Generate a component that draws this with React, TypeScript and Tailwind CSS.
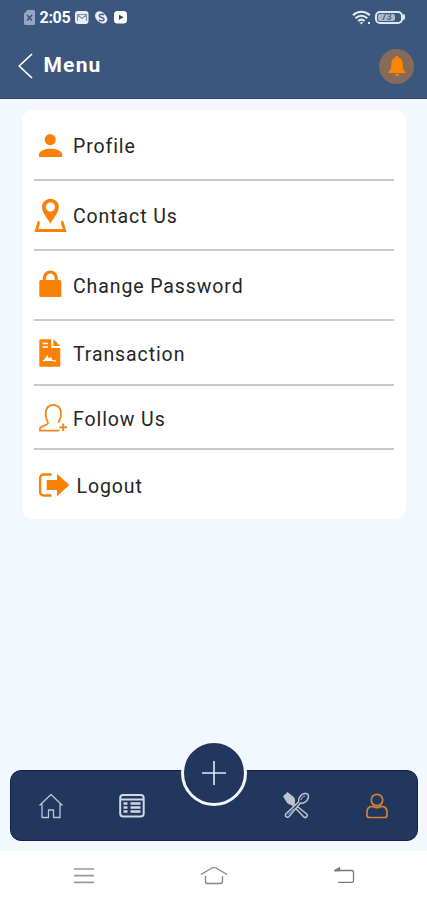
import type { ReactNode } from 'react'

const ORANGE = '#f98105'

interface MenuItem {
  label: string
  row: string
  text?: string
  icon: ReactNode
}

const MENU_ITEMS: MenuItem[] = [
  {
    label: 'Profile',
    row: 'h-[71px] pt-[18px]',
    icon: (
      <g fill={ORANGE}>
        <circle cx="16.2" cy="11.6" r="5.6" />
        <path d="M5 29v-2.600c0-3.800 6.500-5.700 11.600-5.700s11.600 1.900 11.600 5.700V29z" />
      </g>
    ),
  },
  {
    label: 'Contact Us',
    row: 'h-[70px] pt-[17px]',
    icon: (
      <>
        <path
          fill={ORANGE}
          fillRule="evenodd"
          d="M16.400.7c-4.700 0-8.400 3.600-8.400 8.300 0 5.500 5.700 11.800 8.400 16.700 2.700-4.900 8.400-11.200 8.400-16.700 0-4.700-3.700-8.300-8.400-8.300zm0 3.800a4.600 4.600 0 1 1 0 9.200 4.600 4.600 0 0 1 0-9.200z"
        />
        <path d="M5.500 24.500H4.800L2.300 32.500h28.400L28.200 24.500H27" fill="none" stroke={ORANGE} strokeWidth="2.800" />
      </>
    ),
  },
  {
    label: 'Change Password',
    row: 'h-[70px] pt-[17px]',
    icon: (
      <>
        <rect x="5.300" y="12" width="22" height="17" rx="1.500" fill={ORANGE} />
        <path d="M10.300 13V10a6 6 0 0 1 12 0v3" fill="none" stroke={ORANGE} strokeWidth="3.200" />
      </>
    ),
  },
  {
    label: 'Transaction',
    row: 'h-[65px] pt-[15px]',
    icon: (
      <>
        <path fill={ORANGE} d="M6.300 3.300H17.300V12H26.300V29.700a1 1 0 0 1-1 1H6.300a1 1 0 0 1-1-1V4.300a1 1 0 0 1 1-1zM19.300 3.300 26.300 10H19.300z" />
        <path d="M8.500 7.500h5.500M8.500 11h5.500" stroke="#fff" strokeWidth="1.300" />
        <path d="M9 25c2-.3 3-3.400 4.300-4.700l1.200 3.500 2-1.800 1.500 2.300 4 .8" fill="#fff" stroke="#fff" strokeWidth="1.300" />
      </>
    ),
  },
  {
    label: 'Follow Us',
    row: 'h-[64px] pt-[15px]',
    icon: (
      <g fill="none" stroke="#ee8a1c" strokeWidth="1.800">
        <path d="M25.500 29.700H6v-2.200c0-2.500 7.800-2.800 8-5.500.2-1.500-2.400-3.300-2.400-8.800 0-5.800 2.900-9.200 7.700-9.200s7.700 3.400 7.700 9.200c0 4.700-2.300 6.400-2.400 8.500" />
        <path d="M29.200 22.500v7.600M25.400 26.300h7.600" strokeWidth="2" />
      </g>
    ),
  },
  {
    label: 'Logout',
    row: 'h-[70px] pt-[18px]',
    text: 'ml-[6.5px]',
    icon: (
      <>
        <path d="M17.500 6.500H9.500a3.400 3.400 0 0 0-3.400 3.400v14.200a3.400 3.400 0 0 0 3.400 3.400h8" fill="none" stroke={ORANGE} strokeWidth="2.300" />
        <path fill={ORANGE} d="M12.700 12h10.300V5.700L35.300 17 23 28.300V22H12.700z" />
      </>
    ),
  },
]

function StatusBar() {
  return (
    <div className="flex h-[34px] items-center px-6">
      <svg width="11" height="15" viewBox="0 0 11 15">
        <path d="M3.500 0H9.500a1.500 1.500 0 0 1 1.500 1.500v12a1.500 1.500 0 0 1-1.500 1.500h-8A1.500 1.500 0 0 1 0 13.500V3.500z" fill="#95a5c2" />
        <path d="m3 5 5 5.500M8 5l-5 5.500" stroke="#344f7b" strokeWidth="1.300" />
      </svg>
      <span className="mt-[2px] ml-[4.5px] w-[35.5px] text-[16px] leading-none font-bold tracking-[-0.3px]">2:05</span>
      <svg className="mt-px" width="54" height="13" viewBox="0 0 54 13">
        <rect width="13.500" height="13" rx="3" fill="#e9edf4" />
        <path d="M2.500 10V3.800L7 7.500l4.500-3.700V10M3 3.500h8" fill="none" stroke="#8796af" strokeWidth="1.200" />
        <circle cx="24.500" cy="4.800" r="4.500" fill="#e9edf4" />
        <circle cx="28" cy="8.300" r="4.300" fill="#e9edf4" />
        <circle cx="26.200" cy="6.500" r="5" fill="#e9edf4" />
        <path d="M29 4.200c-1-1.500-4.800-1.300-4.800.6 0 2.200 4.900 1.100 4.900 3.400 0 2-4 2.200-5 .4" fill="none" stroke="#3f5a86" strokeWidth="1.400" />
        <rect x="39" width="13" height="12.500" rx="3.500" fill="#fff" />
        <path d="m44 3.700 4.500 2.600L44 9z" fill="#2d4672" />
      </svg>
      <svg className="ml-auto" width="19" height="15" viewBox="0 0 19 15">
        <g fill="none" stroke="#e3ebf6" strokeWidth="2.200">
          <path d="M1 5.200c5-4.600 11.800-4.600 16.800 0" />
          <path d="M3.500 8.200c3.600-3.200 8.200-3.200 11.800 0" />
          <path d="M6.200 11c2-1.700 4.400-1.700 6.400 0" />
        </g>
        <path d="M7.400 12.200h4L9.400 14.500zM16 12h2v2h-2z" fill="#e3ebf6" />
      </svg>
      <div className="-mr-[5px] ml-[4px] flex w-[33px] items-center">
        <div className="flex h-[13px] w-[28px] items-center rounded-[5px] border-2 border-[#dfe8f3] p-px">
          <div className="flex h-full w-[17px] items-center justify-center rounded-[2px] bg-[#aebacb] text-[9px] leading-none font-bold text-[#516785]">73</div>
        </div>
        <div className="h-[6px] w-[2px] rounded-r bg-[#dfe8f3]" />
      </div>
    </div>
  )
}

function Header() {
  return (
    <header className="h-[99px] border-b border-[#294570] bg-[#3b577f] text-white">
      <StatusBar />
      <div className="flex h-[64px] items-center pr-[13px] pl-[18px]">
        <svg width="15" height="26" viewBox="0 0 15 26" fill="none" stroke="#fff" strokeWidth="1.700">
          <path d="M14 1 1.200 13 14 25" />
        </svg>
        <h1 className="mb-[2px] ml-[10.5px] text-[21px] leading-none font-bold tracking-[1.2px]">Menu</h1>
        <div className="ml-auto flex h-[35px] w-[35px] items-center justify-center rounded-full bg-[#876a58]">
          <svg width="18" height="21" viewBox="0 0 18 21" fill="#ff8500">
            <path d="M9 0a1.500 1.500 0 0 1 1.500 1.700c3 .8 4.200 3 4.200 6.300 0 4.500.8 6.500 3 8v1H.3v-1c2.200-1.500 3-3.500 3-8 0-3.300 1.200-5.500 4.200-6.300A1.500 1.500 0 0 1 9 0zM7 18h4a2 2 0 0 1-4 0z" />
          </svg>
        </div>
      </div>
    </header>
  )
}

function BottomNav() {
  return (
    <nav className="relative mr-[9px] ml-[10px] h-[71px] rounded-[11px] border border-[#0c2254] bg-[#21375e]">
      <div className="flex h-full items-center pl-[27px]">
        <svg width="26" height="26" viewBox="0 0 26 26" fill="none" stroke="#bac6d7" strokeWidth="1.300">
          <path d="M1.500 12.500 13 1.500l11.500 11M4 11v13.500h6.500V17h5v7.500H22V11" strokeLinejoin="round" />
        </svg>
        <svg className="ml-[55px]" width="26" height="24" viewBox="0 0 26 24" fill="none" stroke="#cfd8e5" strokeWidth="2">
          <rect x="1.200" y="1" width="23.500" height="21.500" rx="3" />
          <path d="M1 5.500h24" />
          <path d="M4.500 9.500h4M4.500 13.500h4M4.500 17.500h4M11.500 9.500h10M11.500 13.500h10M11.500 17.500h10" strokeWidth="2.500" />
        </svg>
        <svg className="ml-[138px]" width="27" height="27" viewBox="0 0 27 27" fill="none" stroke="#bdc5cf" strokeWidth="1.500">
          <path d="M10.500 11.500 23.700 22a2 2 0 0 1-2.800 2.900L9 12.500" />
          <path d="M1 4.500 4.500 1l5.700 4.500c1.400 1.700 1.300 4.300.5 6.200-2 .9-4 .5-5.800-1z" fill="#bdc5cf" />
          <path d="M15.700 9.800c-.7-3 1.700-7.600 5.600-8.300 3.300-.6 4.800 1.400 4 4.300-1 3.500-4.700 6-8 5.400L6 24.500a2 2 0 0 1-3-2.800z" fill="#21375e" />
          <path d="M18 8c.3-2 2-3.700 4-4M5 22.500l6-6" strokeWidth="1" />
        </svg>
        <svg className="ml-[56px]" width="22" height="26" viewBox="0 0 22 26" fill="none" stroke="#d68136" strokeWidth="1.700">
          <circle cx="11" cy="7" r="5.700" />
          <path d="M6.700 13.300C3 13.300 1 15.500 1 19v3.200A2.300 2.300 0 0 0 3.300 24.500h15.400a2.300 2.300 0 0 0 2.300-2.300V19c0-3.500-2-5.700-5.700-5.700-2.600 1.700-6 1.700-8.600 0z" />
        </svg>
      </div>
      {/* floating add button */}
      <button className="absolute -top-[31px] left-[170px] flex h-[66px] w-[66px] items-center justify-center rounded-full border-[3px] border-[#f3f7fe] bg-[#21375e]">
        <svg width="26" height="26" viewBox="0 0 26 26" stroke="#e5eaf2" strokeWidth="1.600">
          <path d="M13 1v24M1 13h24" />
        </svg>
      </button>
    </nav>
  )
}

function SystemNav() {
  return (
    <div className="mt-[10px] flex h-[49px] items-center justify-between bg-white pr-[72px] pl-[74px]">
      <svg width="20" height="17" viewBox="0 0 20 17" stroke="#999" strokeWidth="1.700">
        <path d="M0 2h20M0 8.700h20M0 15.400h20" />
      </svg>
      <svg width="28" height="19" viewBox="0 0 28 19" fill="none" stroke="#858585" strokeWidth="1.300">
        <path d="M.8 8.500 12.500 1.800q1.500-.8 3 0L27.200 8.500M5.500 10v5.500a2 2 0 0 0 2 2h13a2 2 0 0 0 2-2V10" />
      </svg>
      <svg width="21" height="17" viewBox="0 0 21 17" fill="none" stroke="#777" strokeWidth="1.300">
        <path d="M1 3.500h17a1.500 1.500 0 0 1 1.500 1.500v8.800a1.500 1.500 0 0 1-1.500 1.500H4" />
        <path d="M5.500.8 1 3.500h4.500z" fill="#777" />
      </svg>
    </div>
  )
}

export default function App() {
  return (
    <div className="flex h-[900px] w-[427px] flex-col bg-[#f3f7fe] font-['Roboto',sans-serif]">
      <Header />
      <main className="flex-1 pt-[11px] pr-[21px] pl-[22px]">
        <ul className="h-[409px] rounded-[11px] bg-white px-[12px]">
          {MENU_ITEMS.map((item) => (
            <li key={item.label} className={`${item.row} border-b-2 border-[#c9c9c9] last:border-b-0`}>
              <a className="flex h-9 items-center">
                <svg width="36" height="36" viewBox="0 0 36 36" className="shrink-0">
                  {item.icon}
                </svg>
                <span className={`${item.text ?? 'ml-[3px]'} mt-[2px] text-[19.500px] leading-none tracking-[0.900px] text-[#252525]`}>{item.label}</span>
              </a>
            </li>
          ))}
        </ul>
      </main>
      <BottomNav />
      <SystemNav />
    </div>
  )
}
